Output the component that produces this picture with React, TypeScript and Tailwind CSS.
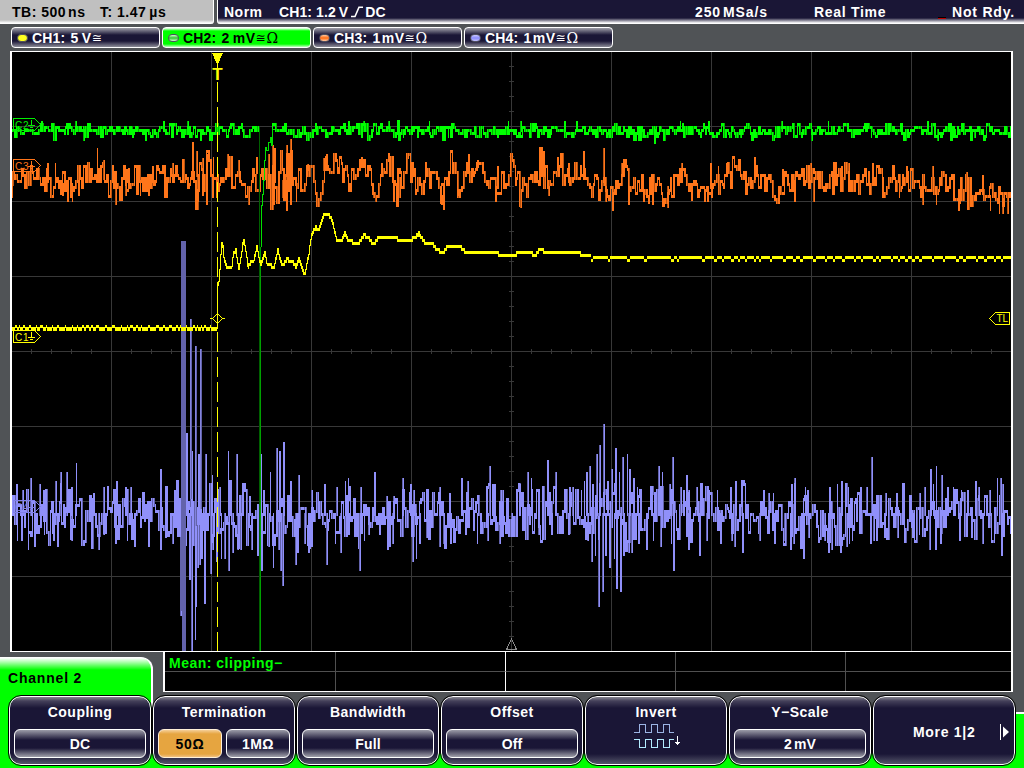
import type { ReactNode } from "react";

type Pt = [number, number];

/* ---------- waveform data: plot-space pixel coordinates ---------- */

const pairs = (s: string): Pt[] =>
  s.trim().split(/\s+/).map((p) => p.split(",").map(Number) as Pt);

const CH4_PEAKS = pairs(`
17,484 23,490 31,478 40,484 44,490 56,481 61,472 67,472 72,487 76,463 94,493 104,487 117,481 126,487 131,487
161,469 175,490 187,433 191,319 192,451 196,346 201,349 199,454 206,454 212,475 220,487 228,451 231,481 237,454
243,484 250,496 261,454 264,490 270,472 277,448 280,451 284,442 291,481 299,475 312,490 325,484 337,487
17,541 22,541 28,550 35,547 44,535 54,541 58,547 72,541 99,550 104,535 116,544 127,541 135,547 149,547 161,550
166,538 173,544 181,616 190,580 192,651 195,640 196,607 198,568 200,565 202,559 205,604 211,574 213,550 217,562
221,559 225,559 229,571 233,553 238,550 241,550 252,550 258,556 262,571 269,547 273,568 279,550 281,571 283,586
296,565 298,553 305,544 309,553 312,547 327,565 335,544
345,481 348,478 361,487 375,472 387,496 394,496 403,478 411,484 414,490 428,490 440,487 450,493 462,478 468,481
490,466 493,484 495,484 501,490 503,490 517,490 520,484 528,472 531,478 536,493 548,460 556,472 570,487 573,487
581,490 584,481 587,472 590,466 593,484 597,454 600,445 604,424 608,481 612,469 616,448 619,472 623,457 627,454
630,469 634,478 637,487 652,487 659,466 662,472 670,484 673,457
341,553 347,532 349,535 358,541 360,571 364,541 369,535 380,535 388,550 390,547 393,544 413,562 416,559 420,544
427,538 440,547 444,544 451,544 466,535 477,544 488,541 500,544 508,535 512,535 539,535 552,535 569,535 588,541
592,562 595,556 599,607 603,592 606,556 610,568 614,559 617,589 621,592 624,556 629,553 632,553 639,544 647,550
653,541 661,547 671,544 674,571
681,487 684,490 687,475 689,490 697,487 701,496 709,490 717,490 731,487 736,481 742,496 764,490 769,493 773,493
792,484 795,478 805,487 808,490 830,487 837,484 842,481 848,487 861,487 867,487 872,457 886,493 897,493 920,493
925,487 931,469 933,484 936,466 942,475 948,487 953,487 961,490 968,490 976,481 979,487 990,490 997,478 1001,478 1003,484
689,550 700,556 707,541 721,544 732,541 735,547 743,553 760,541 775,544 785,541 791,550 794,544 802,544 804,559
809,538 825,541 829,553 832,550 837,544 841,553 847,547 849,544 852,541 871,544 874,541 877,541 885,538 898,538
913,538 919,535 930,550 936,550 941,544 960,541 972,538 983,544 1002,556`);

const CH3_PEAKS = pairs(`
48,163 55,163 97,148 104,160 127,169 153,166 173,163 193,142 197,151 203,158 207,154 213,157 228,154 239,160
257,157 269,154 273,145 275,148 287,145 291,139 308,164 324,158 327,154 338,167
12,198 63,196 68,202 72,202 79,196 116,205 126,196 140,196 149,196 166,193 198,202 203,196 207,205 213,198 217,198
249,205 274,205 283,198 287,211 291,205 296,202
362,157 382,163 408,154 452,157 469,154 478,160 498,166 540,151 544,151 558,157 569,163 584,151 604,148 622,163
351,192 374,198 376,202 394,202 400,198 442,205 458,196 496,202 521,208 549,196 599,198 606,202 613,211 629,205
644,202 653,205 668,208
682,163 711,163 718,166 727,163 755,157 783,169 811,163 842,166 849,163 873,163 907,166 933,166 967,172 983,175
705,202 708,202 712,198 779,202 795,202 814,202 883,198 899,198 923,205 936,205 959,211 990,211 999,214 1003,214 1008,214`);

const CH3_CENTRE = pairs(`
12,184 20,172 35,178 50,182 70,185 90,178 120,180 145,183 170,178 200,176 225,177 240,172 249,190 256,172 270,182
300,178 310,166 314,184 316,207 319,200 323,168 341,173 352,182 362,165 372,186 376,197 380,172 392,170 396,190
404,163 408,158 412,180 430,178 440,186 443,200 446,175 452,162 458,190 468,168 478,166 486,174 495,188 505,180
512,168 521,192 530,180 540,165 549,186 558,170 570,182 582,176 595,192 604,185 613,192 622,176 632,192 645,190
652,194 665,188 680,176 690,182 705,190 720,180 730,174 760,178 775,188 790,180 830,178 845,176 860,184 875,178
895,180 910,182 930,188 950,188 970,190 990,196 1011,201`);

const CH2_PEAKS = pairs(`
84,141 103,138 146,141 133,138 76,121 164,121 188,121 42,121 349,121 364,121 389,121 403,138 418,138 429,121 448,138
481,138 508,121 521,121 538,138 550,138 565,121 577,121 609,138 643,138 655,144 680,121 709,121 741,138 755,138 782,121
812,141 828,121 854,138 871,138 928,121 938,141 954,138 975,138`);

const CH1_LINE = pairs(`
218,283 219,271 220,257 221,244 222,247 223,258 225,266 229,269 231,267 233,253 235,251 237,264 238,270 240,259
242,245 243,242 245,252 247,268 250,262 253,262 256,248 258,260 260,266 264,253 266,264 270,266 273,269 277,251
280,263 283,265 286,260 292,262 295,268 298,260 301,268 303,275 305,271 308,255 311,235 313,228 315,227 318,230
320,222 323,213 327,213 330,217 333,228 336,242 341,240 344,231 347,240 350,242 357,244 363,236 368,238 372,245
377,239 393,239 408,241 413,239 418,233 422,240 426,245 432,244 436,250 442,254 446,248 460,248 465,253 475,254
495,254 500,255 530,254 535,256 538,251 547,252 558,254 578,253 582,256 600,257 1011,257`);

const lerp = (pts: Pt[], x: number) => {
  if (x <= pts[0][0]) return pts[0][1];
  for (let i = 1; i < pts.length; i++) {
    const [x1, y1] = pts[i];
    if (x <= x1) {
      const [x0, y0] = pts[i - 1];
      return y0 + ((y1 - y0) * (x - x0)) / (x1 - x0);
    }
  }
  return pts[pts.length - 1][1];
};

const seeded = (seed: number) => () => {
  seed = (seed * 1664525 + 1013904223) >>> 0;
  return seed / 4294967296;
};

const col = (x: number, a: number, b: number) =>
  `M${x} ${Math.min(a, b)}h1V${Math.max(a, b) + 3}h-1z`;

function noise(
  seed: number,
  from: number,
  to: number,
  centre: (x: number) => number,
  amp: (x: number) => number,
  peaks: Pt[]
) {
  const rnd = seeded(seed);
  let bright = "";
  let dim = "";
  const q = (v: number) => Math.round(v / 3) * 3;
  let prev = q(centre(from));
  for (let x = from; x < to; ) {
    const next = q(centre(x) + (rnd() + rnd() - 1) * amp(x));
    const r = rnd();
    bright += col(x, prev, next);
    if (r < 0.7 && x + 1 < to) {
      if (r < 0.28) dim += col(x + 1, prev, next);
      else if (r < 0.6) bright += col(x + 1, prev, next);
      else bright += col(x + 1, next, next);
      x += 2;
    } else {
      x += 1;
    }
    prev = next;
  }
  for (const [x, y] of peaks) {
    if (x < from || x >= to) continue;
    const c = q(centre(x));
    const end = y > c ? y - 3 : y;
    bright += col(x, c, end);
    const r = rnd();
    if (r < 0.85 && x > from) {
      if (r < 0.4) dim += col(x - 1, c, end);
      else bright += col(x - 1, c, end);
    }
  }
  return { bright, dim };
}

const ch4 = noise(77, 12, 1011, () => 513, (x) => (x > 585 && x < 635 ? 50 : 36), CH4_PEAKS);
const ch3 = noise(
  31, 12, 1011,
  (x) => lerp(CH3_CENTRE, x) - 1,
  (x) => ((x > 190 && x < 220) || (x > 268 && x < 300) ? 36 : x > 313 && x < 320 ? 6 : x > 900 ? 23 : 20),
  CH3_PEAKS
);
const ch2a = noise(5, 12, 259, () => 129.5, () => 9, CH2_PEAKS);
const ch2b = noise(9, 272, 1011, () => 129.5, () => 9, CH2_PEAKS);

const ch1 = (() => {
  const rnd = seeded(12);
  let d = "";
  let low = false;
  for (let x = 12; x < 217; ) {
    const run = low ? 1 + Math.floor(rnd() * 3) : 2 + Math.floor(rnd() * 5);
    const end = Math.min(217, x + run);
    low = !low;
    d += `M${x} ${low ? 327 : 325}H${end}v${low ? 4 : 3}H${x}z`;
    x = end;
  }
  d += "M217 283h1v46h-1z";
  let prev = 283;
  let left = 0;
  low = false;
  for (let x = 218; x < 1011; x++) {
    const flat = x > 590;
    if (flat && left-- <= 0) {
      low = !low;
      left = low ? 1 + Math.floor(rnd() * 2) : 2 + Math.floor(rnd() * (x < 680 ? 22 : 9));
    }
    const base = lerp(CH1_LINE, x);
    const y = (flat ? 256 : Math.round((base - 1) / 3) * 3 + (base < 235 ? 0 : -1)) + (flat && low ? 3 : 0);
    if (flat) d += `M${x} ${y}h1v3h-1z`;
    else d += `M${x} ${Math.min(prev, y)}h1V${Math.max(prev, y) + (Math.abs(prev - y) > 3 ? 1 : 3)}h-1z`;
    prev = y;
  }
  return d;
})();

const range = (n: number, start: number, step: number) =>
  Array.from({ length: n }, (_, i) => start + i * step);

const GRID = [
  ...range(9, 111, 100).map((x) => `M${x} 52h1v599h-1z`),
  ...range(7, 126, 75).map((y) => `M12 ${y}h999v1h-999z`),
  ...range(50, 31, 20).map((x) => `M${x} 349h1v5h-1z`),
  ...range(40, 66, 15).map((y) => `M509 ${y}h5v1h-5z`),
].join("");

/* ---------- pieces ---------- */

function ChannelTag({ y, color, label }: { y: number; color: string; label: string }) {
  return (
    <g stroke={color} fill="none">
      <path d={`M13.5 ${y - 6}.5h21l6 6l-6 6h-21z`} />
      <text x="15" y={y + 4.5} fill={color} stroke="none" fontSize="10" letterSpacing="0.8">
        {label}
      </text>
      <path d={`M31.5 ${y - 4}v5M28 ${y + 1}.5h7M30 ${y + 3}.5h3`} />
    </g>
  );
}

function Plot() {
  return (
    <svg
      className="block h-[599px] w-[999px] font-normal tracking-normal"
      viewBox="12 52 999 599"
      shapeRendering="crispEdges"
      fontFamily='"Liberation Sans", sans-serif'
    >
      <path d={GRID} fill="#383838" />
      <path d={ch4.dim} fill="#6363ab" />
      <path d={ch4.bright} fill="#9090fa" />
      <path d="M181 241h5v410h-4v-40h-1zM191 319h1v180h-1zM196 346h1v180h-1zM201 349h1v160h-1z" fill="#6363ab" />
      <path d="M190 319h1v180h-1zM195 346h1v180h-1zM200 349h1v160h-1z" fill="#8383dd" />
      <ChannelTag y={506} color="#8080e8" label="C4" />
      <path d={ch3.dim} fill="#b85412" />
      <path d={ch3.bright} fill="#ff751a" />
      <ChannelTag y={165} color="#ff751a" label="C3" />
      <path d={ch2a.dim + ch2b.dim} fill="#00b000" />
      <path d={ch2a.bright + ch2b.bright} fill="#00ff00" />
      <ChannelTag y={124} color="#00f000" label="C2" />
      <path d="M259 127h1v524h-1z" fill="#006000" />
      <path d="M260 247h1v404h-1z" fill="#00a000" />
      <path
        d="M261.5 247V205h1V194h1V180h1V160h1V147h1V150h2V142h2V137h1V145h1V129h2"
        fill="none"
        stroke="#00e000"
      />
      <ChannelTag y={336} color="#ffff00" label="C1" />
      <path d={ch1} fill="#ffff00" />
      <path d="M217.5 82V651" stroke="#ffff00" strokeDasharray="20 5" />
      <path d="M212 53h11l-5 11h-1z" fill="#ffff00" />
      <path d="M217.5 63v6" stroke="#ffff00" />
      <text x="217.5" y="80" textAnchor="middle" fontSize="17" fontWeight="bold" fill="#ffff00">
        T
      </text>
      <path d="M210 318.5h3M222 318.5h3M217.5 313.5l5 5l-5 5l-5-5z" fill="none" stroke="#ffff00" />
      <path d="M989.5 318.5l6-6h14v12h-14z" fill="#000" stroke="#ffff00" />
      <text x="996.5" y="322" fontSize="10" fill="#ffff00">TL</text>
      <path d="M511.5 639l-5 10.5h10z" fill="none" stroke="#8c8c8c" />
    </svg>
  );
}

function Symbols({ ohm }: { ohm?: boolean }) {
  return (
    <span className="flex items-center font-['DejaVu_Sans',sans-serif] text-[12px] font-normal tracking-normal">
      <span className="w-[11px]">≅</span>
      {ohm && <span className="w-[12px] font-['DejaVu_Serif',serif] text-[14px]">Ω</span>}
    </span>
  );
}

function ChannelButton({ dot, name, volts, ohm, active }: {
  dot: string; name: string; volts: ReactNode; ohm?: boolean; active?: boolean;
}) {
  return (
    <div
      className={`flex h-[21px] w-[149px] items-center rounded-[4px] border border-white pl-[5px] ${
        active
          ? "bg-[linear-gradient(#ffffff_0px,#00ff00_3px,#00ff00_16px,#c0ffc0_19px)] text-black"
          : "bg-[linear-gradient(#a0a0aa_0px,#1a1636_7px,#1a1636_13px,#8c8c98_19px)] text-white"
      }`}
    >
      <span className={`h-[8px] w-[11px] rounded-full border border-[#505060] ${dot}`} />
      <span className="ml-[4px] whitespace-pre tracking-[0.2px]">{name}:</span>
      <span className="ml-[5px] whitespace-pre tracking-[0.5px]">{volts}</span>
      <Symbols ohm={ohm} />
    </div>
  );
}

function SoftKey({ title, children }: { title?: string; children: ReactNode }) {
  return (
    <div className="flex h-[69px] w-[142px] shrink-0 flex-col items-center rounded-[12px] border border-white bg-[linear-gradient(#85858f_0px,#44405a_4px,#1a1636_11px,#1a1636_57px,#55556a_67px)] px-1 text-white outline outline-black">
      {title && <div className="mt-[6px] h-[19px] leading-[19px]">{title}</div>}
      {children}
    </div>
  );
}

function Value({ children, on, half }: { children: ReactNode; on?: boolean; half?: boolean }) {
  return (
    <div
      className={`flex h-[29px] items-center justify-center rounded-[6px] border tracking-[0.1px] ${half ? "w-[64px]" : "w-[132px]"} ${
        on
          ? "border-[#fff0d8] bg-[linear-gradient(#f5cf98_0px,#e6a540_4px,#e6a540_24px,#f0c080_27px)] text-black"
          : "border-white bg-[linear-gradient(#9c9ca8_0px,#1a1636_10px,#1a1636_18px,#a0a0aa_27px)] text-white"
      }`}
    >
      {children}
    </div>
  );
}

export default function App() {
  return (
    <div className="flex h-[768px] w-[1024px] flex-col overflow-hidden bg-[#505356] font-['Liberation_Sans',Arial,sans-serif] text-[14px] leading-none font-bold tracking-[0.5px]">
      <header className="flex h-6 shrink-0 gap-[3px] whitespace-pre">
        <div className="flex w-[214px] items-center rounded-br-[3px] border-r border-white bg-[linear-gradient(#c0c0c0_20px,#ffffff_23px)] pl-[12px] text-black">
          <span className="w-[88px]">TB: 500<span className="ml-[2px]">ns</span></span>
          <span>T: 1.47<span className="ml-[3px]">µs</span></span>
        </div>
        <div className="flex flex-1 items-center rounded-bl-[3px] border-l border-white bg-[linear-gradient(#1a1636_18px,#ffffff_23px)] pl-[6px] text-white">
          <span className="w-[55px]">Norm</span>
          <span className="flex w-[416px] items-center tracking-[0.1px]">
            CH1: 1.2<span className="ml-[3px]">V</span>
            <svg className="mr-[2px] ml-[3px] h-[12px] w-[12px]" viewBox="0 0 12 12" fill="none" stroke="#fff" strokeWidth="1.6">
              <path d="M0 10.5h4L8 1.2h4" />
            </svg>
            DC
          </span>
          <span className="w-[119px] tracking-[0.9px]">250<span className="ml-[2px]">MSa/s</span></span>
          <span className="w-[124px] tracking-[0.7px]">Real Time</span>
          <span className="mt-[12px] mr-[6px] h-[2px] w-[8px] border-b border-[#c00000] bg-black" />
          <span className="tracking-[0.8px]">Not Rdy.</span>
        </div>
      </header>

      <nav className="flex h-[27px] shrink-0 gap-[2px] pt-[3px] pl-[11px] tracking-[0.1px]">
        <ChannelButton dot="bg-[#ffff20]" name="CH1" volts={<>5<span className="ml-[3px]">V</span></>} />
        <ChannelButton dot="bg-[linear-gradient(#d0ffd0,#30c830,#d0ffd0)]" name="CH2" volts={<>2<span className="ml-[3px]">mV</span></>} ohm active />
        <ChannelButton dot="bg-[linear-gradient(#ffc8a0,#ff6a10,#ffc8a0)]" name="CH3" volts={<>1<span className="ml-px">mV</span></>} ohm />
        <ChannelButton dot="bg-[linear-gradient(#c8c8ff,#8a8aff,#c0c0ff)]" name="CH4" volts={<>1<span className="ml-px">mV</span></>} ohm />
      </nav>

      <main className="ml-[10px] h-[601px] w-[1003px] shrink-0 border-x-2 border-y border-white bg-black">
        <Plot />
      </main>

      <section className="flex h-[43px] shrink-0">
        <div className="w-[163px] pt-[5px]">
          <div className="h-[38px] w-[153px] rounded-tr-[12px] border-t border-r-2 border-white bg-[linear-gradient(#ffffff_0px,#b0ffb0_4px,#00ff00_12px)] pt-[13px] pl-[8px] tracking-[0.8px] text-black">
            Channel 2
          </div>
        </div>
        <div className="grid h-[40px] w-[850px] grid-cols-[171px_170px_170px_170px_1fr] grid-rows-[20px_19px] border-x-2 border-b border-white bg-black text-[#00ff00]">
          {range(10, 0, 1).map((i) => (
            <div
              key={i}
              className={`overflow-visible whitespace-nowrap ${i < 5 ? "border-b border-b-[#505050]" : ""} ${
                i % 5 === 1 ? "border-r border-r-white" : i % 5 < 4 ? "border-r border-r-[#505050]" : ""
              }`}
            >
              {i === 0 && <span className="block pt-[4px] pl-[4px]">Mean: clipping−</span>}
            </div>
          ))}
        </div>
      </section>

      <footer className="flex flex-1 gap-[2px] bg-[linear-gradient(90deg,#00ff00_151px,#ffffff_151px,#ffffff_153px,transparent_153px),linear-gradient(#505356_17px,#ffffff_17px,#ffffff_19px,#00ff00_19px)] bg-[length:100%_17px,100%_100%] bg-no-repeat">
        <div className="-mr-[2px] w-[9px] shrink-0 bg-[#00ff00]" />
        <div className="flex gap-[2px] pt-px">
          <SoftKey title="Coupling">
            <div className="mt-[7px]"><Value>DC</Value></div>
          </SoftKey>
          <SoftKey title="Termination">
            <div className="mt-[7px] flex gap-1">
              <Value half on><span className="tracking-[0.8px]">50Ω</span></Value>
              <Value half><span className="tracking-[0.5px]">1MΩ</span></Value>
            </div>
          </SoftKey>
          <SoftKey title="Bandwidth">
            <div className="mt-[7px]"><Value>Full</Value></div>
          </SoftKey>
          <SoftKey title="Offset">
            <div className="mt-[7px]"><Value>Off</Value></div>
          </SoftKey>
          <SoftKey title="Invert">
            <svg className="mt-[1px] h-[26px] w-[48px]" viewBox="632 723 48 26" fill="none" shapeRendering="crispEdges">
              <path d="M634 732.5h5.5v-8h6v8h6v-8h6v8h6v-8h6v8h4" stroke="#9cb4e4" />
              <path d="M634 739.5h5.5v8h6v-8h6v8h6v-8h6v8h6v-8h4" stroke="#b4ecff" />
              <path d="M677.5 736v9M675 742.5h5M676 743.5h3" stroke="#fff" />
            </svg>
          </SoftKey>
          <SoftKey title="Y−Scale">
            <div className="mt-[7px]"><Value><span className="mr-[2px]">2</span>mV</Value></div>
          </SoftKey>
          <SoftKey>
            <div className="flex h-full w-full items-center pt-[3px] pl-[35px]">
              <span className="w-[87px] whitespace-nowrap tracking-[0.7px]">More 1|2</span>
              <svg className="h-[16px] w-[10px] shrink-0" viewBox="0 0 10 16">
                <path d="M.5 0v16" stroke="#fff" />
                <path d="M3 2.5l6 5.5l-6 5.5z" fill="#fff" />
              </svg>
            </div>
          </SoftKey>
        </div>
      </footer>
    </div>
  );
}
